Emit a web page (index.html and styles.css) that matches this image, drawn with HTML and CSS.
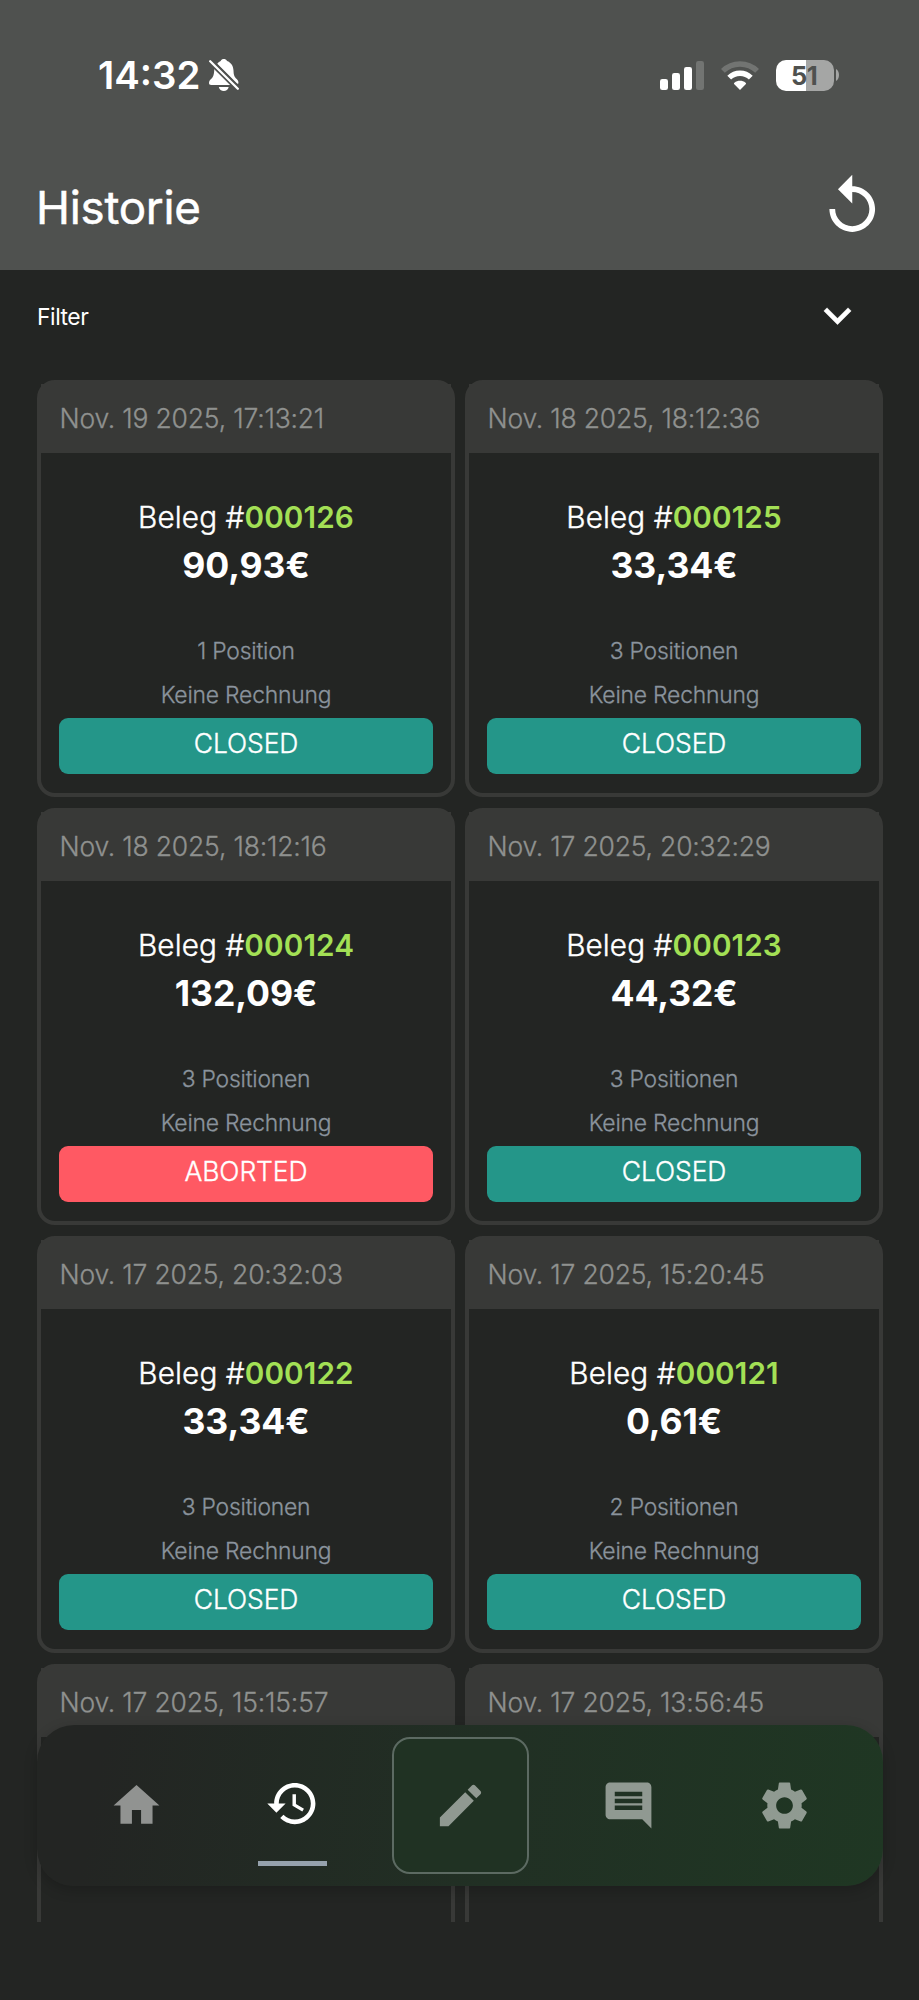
FILE: index.html
```html
<!DOCTYPE html>
<html lang="de">
<head>
<meta charset="utf-8">
<title>Historie</title>
<link rel="stylesheet" href="styles.css">
</head>
<body>
<div class="screen">
  <header class="header">
    <div class="status">
      <span class="time">14:32</span>
      <svg class="bell" viewBox="0 0 30 32" fill="#fff">
        <path d="M8.3 4.7C9.4 3.2 10.600 2.300 11.700 1.900C12.300.6 13.500 0 14.800 0C16.100 0 17.400.6 18 1.900C22 3.300 24.300 6.800 24.500 11.500C24.700 16 25.200 17.600 27.700 20C29 21.300 29.700 22.600 29.400 24.500L28.300 24.700Z"/>
        <path d="M5.300 9.200L22 25.900H2.300C.6 25.900 0 25 0 23.900C0 22.200 1 21.200 2.600 19.600C4.700 17.400 5.200 14.500 5.300 9.200Z"/>
        <path d="M9.800 28H19.700C19.100 30.500 17.200 32 14.800 32C12.300 32 10.400 30.500 9.800 28Z"/>
        <path d="M1.200 2.200L28.800 29.800" stroke="#4f514f" stroke-width="5.500"/>
        <path d="M1.200 2.200L28.800 29.800" stroke="#fff" stroke-width="2.300" stroke-linecap="round"/>
      </svg>
      <svg class="signal" viewBox="0 0 44 29" fill="#fff">
        <rect x="0" y="18" width="8" height="11" rx="2.300"/>
        <rect x="12" y="12" width="8" height="17" rx="2.300"/>
        <rect x="24" y="6" width="8" height="23" rx="2.300"/>
        <rect x="36" y="0" width="8" height="29" rx="2.300" fill="#727472"/>
      </svg>
      <svg class="wifi" viewBox="0 0 38 29">
        <path d="M1.900 9.900A24.500 24.500 0 0 1 36.100 9.900" fill="none" stroke="#727472" stroke-width="5.400"/>
        <path d="M8.200 16.700A15.400 15.400 0 0 1 29.800 16.700" fill="none" stroke="#fff" stroke-width="5.400"/>
        <path d="M19 29L13.300 23.300C12.800 22.800 12.900 22.200 13.400 21.800C16.600 19.200 21.400 19.200 24.600 21.800C25.100 22.200 25.200 22.800 24.700 23.300Z" fill="#fff"/>
      </svg>
      <div class="battery"><span class="level">51</span></div>
      <svg class="nub" viewBox="0 0 3 12"><path d="M0 0C2 1 3 3.500 3 6S2 11 0 12Z" fill="#a5a6a5"/></svg>
    </div>
    <div class="titlebar">
      <h1 class="title">Historie</h1>
      <svg class="replay" viewBox="0 0 24 24" fill="#fff"><path d="M12 5V1L7 6l5 5V7c3.310 0 6 2.690 6 6s-2.690 6-6 6-6-2.690-6-6H4c0 4.420 3.580 8 8 8s8-3.580 8-8-3.580-8-8-8z"/></svg>
    </div>
  </header>

  <div class="filter">
    <span>Filter</span>
    <svg class="chevron" viewBox="0 0 24 24" fill="#fff"><path d="M7.410 8.580L12 13.170l4.590-4.590L18 10l-6 6-6-6z" stroke="#fff" stroke-width=".1" stroke-linejoin="round"/></svg>
  </div>

  <main class="list">
    <article class="card">
      <div class="date">Nov. 19 2025, 17:13:21</div>
      <div class="body">
        <div class="receipt">Beleg #<b>000126</b></div>
        <div class="price">90,93€</div>
        <div class="meta">1 Position</div>
        <div class="meta">Keine Rechnung</div>
        <div class="state">CLOSED</div>
      </div>
    </article>
    <article class="card">
      <div class="date">Nov. 18 2025, 18:12:36</div>
      <div class="body">
        <div class="receipt">Beleg #<b>000125</b></div>
        <div class="price">33,34€</div>
        <div class="meta">3 Positionen</div>
        <div class="meta">Keine Rechnung</div>
        <div class="state">CLOSED</div>
      </div>
    </article>
    <article class="card">
      <div class="date">Nov. 18 2025, 18:12:16</div>
      <div class="body">
        <div class="receipt">Beleg #<b>000124</b></div>
        <div class="price">132,09€</div>
        <div class="meta">3 Positionen</div>
        <div class="meta">Keine Rechnung</div>
        <div class="state aborted">ABORTED</div>
      </div>
    </article>
    <article class="card">
      <div class="date">Nov. 17 2025, 20:32:29</div>
      <div class="body">
        <div class="receipt">Beleg #<b>000123</b></div>
        <div class="price">44,32€</div>
        <div class="meta">3 Positionen</div>
        <div class="meta">Keine Rechnung</div>
        <div class="state">CLOSED</div>
      </div>
    </article>
    <article class="card">
      <div class="date">Nov. 17 2025, 20:32:03</div>
      <div class="body">
        <div class="receipt">Beleg #<b>000122</b></div>
        <div class="price">33,34€</div>
        <div class="meta">3 Positionen</div>
        <div class="meta">Keine Rechnung</div>
        <div class="state">CLOSED</div>
      </div>
    </article>
    <article class="card">
      <div class="date">Nov. 17 2025, 15:20:45</div>
      <div class="body">
        <div class="receipt">Beleg #<b>000121</b></div>
        <div class="price">0,61€</div>
        <div class="meta">2 Positionen</div>
        <div class="meta">Keine Rechnung</div>
        <div class="state">CLOSED</div>
      </div>
    </article>
    <article class="card">
      <div class="date">Nov. 17 2025, 15:15:57</div>
      <div class="body"></div>
    </article>
    <article class="card">
      <div class="date">Nov. 17 2025, 13:56:45</div>
      <div class="body"></div>
    </article>
  </main>

  <nav class="nav">
    <a class="item"><svg class="icon" viewBox="0 0 24 24"><path d="M10 20v-6h4v6h5v-8h3L12 3 2 12h3v8z"/></svg></a>
    <a class="item active"><svg class="icon" viewBox="0 0 24 24"><path d="M13 3c-4.970 0-9 4.030-9 9H1l3.890 3.890.07.14L9 12H6c0-3.870 3.130-7 7-7s7 3.130 7 7-3.130 7-7 7c-1.930 0-3.680-.79-4.940-2.060l-1.420 1.420C8.270 19.990 10.510 21 13 21c4.970 0 9-4.030 9-9s-4.030-9-9-9zm-1 5v5l4.280 2.540.72-1.210-3.500-2.080V8H12z"/></svg></a>
    <a class="item compose"><svg class="icon" viewBox="0 0 24 24"><path d="M3 17.250V21h3.750L17.810 9.940l-3.750-3.750L3 17.250zM20.710 7.040c.39-.39.39-1.020 0-1.410l-2.340-2.340c-.39-.39-1.020-.39-1.410 0l-1.830 1.830 3.750 3.750 1.830-1.830z"/></svg></a>
    <a class="item"><svg class="icon" viewBox="0 0 24 24"><path fill-rule="evenodd" d="M21.990 4c0-1.100-.89-2-1.990-2H4c-1.100 0-2 .9-2 2v12c0 1.100.9 2 2 2h14l4 4-.01-18zM18 14H6v-2h12v2zm0-3H6V9h12v2zm0-3H6V6h12v2z"/></svg></a>
    <a class="item"><svg class="icon" viewBox="0 0 24 24"><path d="M19.430 12.980c.04-.32.07-.64.07-.98s-.03-.66-.07-.98l2.110-1.650c.19-.15.24-.42.12-.64l-2-3.460c-.12-.22-.39-.3-.61-.22l-2.490 1c-.52-.4-1.080-.73-1.690-.98l-.38-2.650C14.460 2.180 14.250 2 14 2h-4c-.25 0-.46.18-.49.42l-.38 2.650c-.61.25-1.170.59-1.690.98l-2.490-1c-.23-.09-.49 0-.61.22l-2 3.460c-.13.22-.07.49.12.64l2.110 1.650c-.04.32-.07.65-.07.98s.03.66.07.98l-2.110 1.650c-.19.15-.24.42-.12.64l2 3.460c.12.22.39.3.61.22l2.490-1c.52.4 1.080.73 1.690.98l.38 2.650c.03.24.24.42.49.42h4c.25 0 .46-.18.49-.42l.38-2.650c.61-.25 1.170-.59 1.690-.98l2.490 1c.23.09.49 0 .61-.22l2-3.460c.12-.22.07-.49-.12-.64l-2.110-1.650zM12 15.650c-2.010 0-3.650-1.640-3.650-3.650s1.640-3.650 3.650-3.650 3.650 1.640 3.650 3.650-1.640 3.650-3.650 3.650z"/></svg></a>
  </nav>
</div>
</body>
</html>
```
FILE: styles.css
```css
* { box-sizing: border-box; }
body { margin: 0; background: #232523; }
.screen {
  position: relative;
  width: 919px;
  height: 2000px;
  overflow: hidden;
  background: #232523;
  color: #fff;
  font-family: Inter, sans-serif;
}

/* header */
.header { height: 270px; background: #4f514f; }
.status {
  display: flex;
  align-items: center;
  height: 150px;
  padding-left: 98px;
}
.time {
  width: 111px;
  font-size: 38.4px;
  font-weight: 600;
  line-height: 46px;
  white-space: nowrap;
}
.bell { width: 30px; height: 32px; }
.signal { width: 44px; height: 29px; margin-left: 421px; }
.wifi { width: 38px; height: 29px; margin-left: 17px; }
.battery {
  width: 58px;
  height: 31px;
  margin-left: 17px;
  border-radius: 10px;
  background: linear-gradient(90deg, #fff 51.5%, #a5a6a5 51.5%);
  text-align: center;
}
.level {
  display: block;
  padding-right: 2px;
  font-size: 25.5px;
  font-weight: 700;
  letter-spacing: -0.6px;
  line-height: 31px;
  color: #4f514f;
}
.nub { width: 3px; height: 12px; margin-left: 2px; }
.titlebar {
  display: flex;
  justify-content: space-between;
  align-items: center;
  height: 112px;
  padding: 0 33px 0 36px;
}
.title {
  margin: 3px 0 0;
  font-size: 45.7px;
  font-weight: 400;
  letter-spacing: -0.25px;
  line-height: 56px;
  -webkit-text-stroke: 0.5px #fff;
}
.replay { width: 68.5px; height: 68.5px; }

/* filter */
.filter {
  display: flex;
  justify-content: space-between;
  align-items: center;
  height: 110px;
  padding: 0 54px 16px 37px;
  font-size: 22.86px;
  font-weight: 400;
  letter-spacing: -0.45px;
}
.chevron { width: 55px; height: 55px; margin-top: -3px; }

/* receipts */
.list {
  display: grid;
  grid-template-columns: 418px 418px;
  grid-auto-rows: 416.5px;
  gap: 11.5px 10px;
  height: 1542px;
  padding-left: 37px;
  overflow: hidden;
}
.card {
  border: 4px solid #383937;
  border-radius: 18px;
}
.date {
  height: 69px;
  padding: 0 18.5px;
  background: #383937;
  color: #8f918f;
  font-size: 26.5px;
  font-weight: 300;
  letter-spacing: -0.2px;
  line-height: 69px;
  white-space: nowrap;
  -webkit-text-stroke: 0.3px #8f918f;
}
.body {
  display: flex;
  flex-direction: column;
  padding: 45px 18px 0;
  text-align: center;
}
.receipt {
  font-size: 29.7px;
  font-weight: 300;
  letter-spacing: 0.1px;
  line-height: 38px;
  -webkit-text-stroke: 0.4px #fff;
}
.receipt b { color: #a3e055; font-weight: 600; -webkit-text-stroke: 0; }
.price {
  margin: 6px 0 40px;
  font-size: 35.6px;
  font-weight: 700;
  letter-spacing: -0.1px;
  line-height: 48px;
}
.meta {
  color: #8a939c;
  font-size: 22.86px;
  font-weight: 300;
  letter-spacing: -0.2px;
  line-height: 43.5px;
  -webkit-text-stroke: 0.3px #8a939c;
}
.state {
  height: 55.5px;
  margin-top: 1px;
  border-radius: 9px;
  background: #249689;
  font-size: 26.5px;
  font-weight: 300;
  letter-spacing: -0.1px;
  line-height: 50px;
  -webkit-text-stroke: 0.35px #fff;
}
.aborted { background: #ff5963; }

/* bottom navigation, floats over the list */
.nav {
  position: absolute;
  left: 37px;
  top: 1725px;
  display: flex;
  align-items: center;
  width: 846px;
  height: 160.5px;
  padding: 0 21px;
  border-radius: 37px;
  background: linear-gradient(100deg, #232523 8%, #213024 55%, #1f3723 100%);
  box-shadow: 0 4px 14px rgba(0, 0, 0, .2);
}
.item {
  display: flex;
  flex-direction: column;
  align-items: center;
  justify-content: center;
  width: 156px;
  height: 137px;
  fill: rgba(255, 255, 255, .5);
}
.icon { width: 55px; height: 55px; }
.active { fill: #fff; padding-bottom: 4px; }
.active::after {
  content: "";
  width: 69px;
  height: 5px;
  margin: 30px 0 -35px;
  background: #95a1ac;
}
.compose {
  width: 137px;
  margin: 0 21.5px;
  border: 2px solid #5c6a62;
  border-radius: 18px;
  background: #203223;
}
```
